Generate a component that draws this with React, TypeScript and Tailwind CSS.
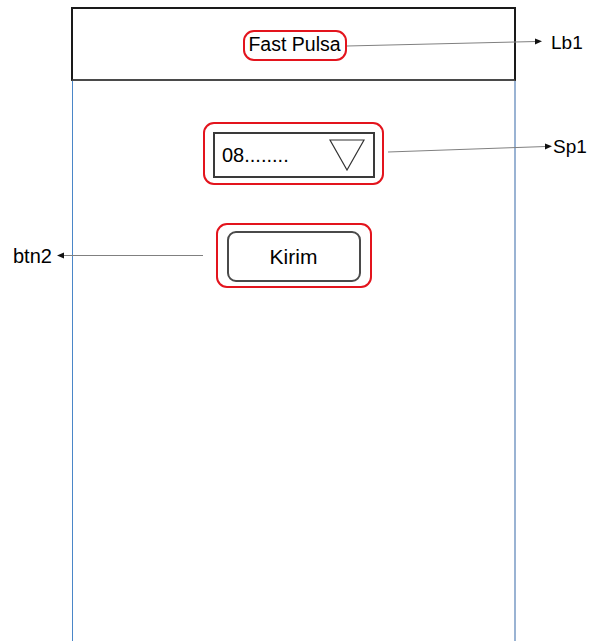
import React from "react";

export default function App() {
  const font = { fontFamily: '"Liberation Sans", Arial, sans-serif' };
  return (
    <div className="relative w-[593px] h-[641px] bg-white overflow-hidden text-black" style={font}>
      <div className="ml-[71px] pt-[7px] w-[445px] h-[641px] flex flex-col">
        {/* header */}
        <div className="h-[74px] border-2 border-[#1a1a1a] border-b-[#4a4a4a] flex items-center justify-center shrink-0">
          <div className="mt-[2px] ml-[2px] w-[104px] h-[31px] border-2 border-[#e3141d] rounded-[11px] flex items-center justify-center text-[19.5px] leading-none">
            Fast Pulsa
          </div>
        </div>
        {/* body */}
        <div className="flex-1 ml-[1px] border-l border-l-[#4a86c8] border-r-2 border-r-[#9ab3d3] flex flex-col items-center pt-[41px]">
          <div className="w-[181px] h-[63px] border-2 border-[#e3141d] rounded-[11px] pl-[8px] pt-[8px]">
            <div className="w-[162px] h-[46px] border-2 border-[#3a3a3a] flex items-center justify-between pl-[7px] pr-[8px]">
              <span className="text-[20px] leading-none">08........</span>
              <svg width="36" height="32" viewBox="0 0 36 32">
                <polygon points="1,1 35,1 18,31" fill="none" stroke="#333" strokeWidth="1.2" />
              </svg>
            </div>
          </div>
          <div className="mt-[38px] w-[156px] h-[65px] border-2 border-[#e3141d] rounded-[11px] pl-[9px] pt-[6px]">
            <div className="w-[134px] h-[51px] border-2 border-[#4a4a4a] rounded-[9px] flex items-center justify-center text-[21px] leading-none">
              Kirim
            </div>
          </div>
        </div>
      </div>

      {/* annotation arrows */}
      <svg className="absolute left-0 top-0 pointer-events-none" width="593" height="641" viewBox="0 0 593 641">
        <line x1="347" y1="46" x2="536" y2="41.5" stroke="#808080" strokeWidth="1" />
        <polygon points="542,41.3 535,38.5 535,44.5" fill="#111" />
        <line x1="388" y1="152" x2="546" y2="146.5" stroke="#808080" strokeWidth="1" />
        <polygon points="552,146.3 545,143.5 545,149.5" fill="#111" />
        <line x1="203" y1="255.5" x2="63" y2="255.5" stroke="#808080" strokeWidth="1" />
        <polygon points="57,255.5 64,252.5 64,258.5" fill="#111" />
      </svg>

      {/* annotation labels */}
      <div className="absolute left-[551px] top-[33px] text-[19px] leading-none">Lb1</div>
      <div className="absolute left-[553px] top-[137px] text-[19px] leading-none">Sp1</div>
      <div className="absolute left-[13px] top-[246px] text-[20px] leading-none">btn2</div>
    </div>
  );
}
